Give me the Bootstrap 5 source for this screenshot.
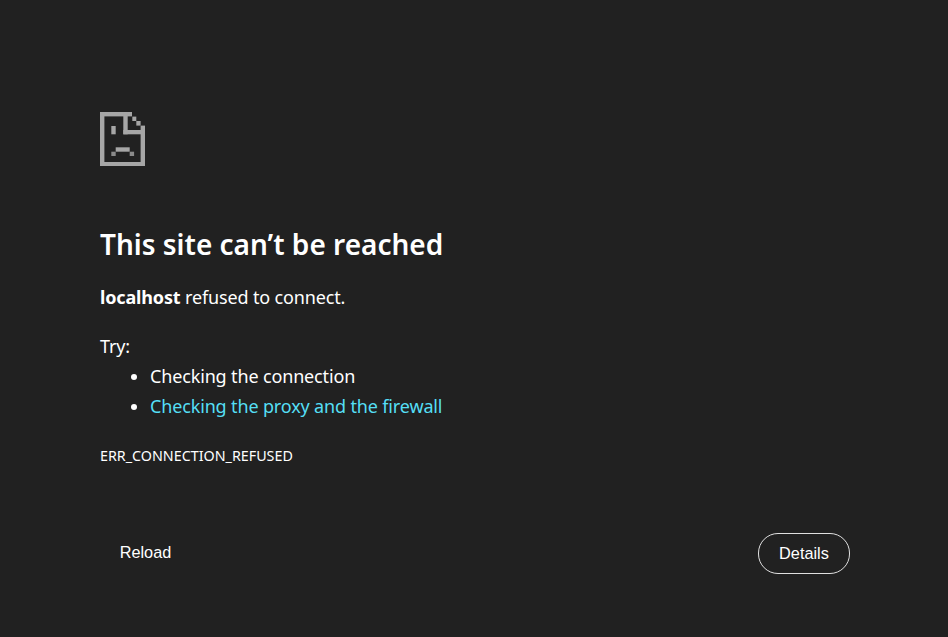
<!DOCTYPE html>
<html lang="en">
<head>
  <meta charset="UTF-8">
  <title>localhost</title>
  <meta name="viewport" content="width=device-width, initial-scale=1">
  <link href="https://cdn.jsdelivr.net/npm/bootstrap@5.3.0/dist/css/bootstrap.min.css" rel="stylesheet">
  <style>
    body {
      background: #212121;
      color: #fff;
      font-family: "Noto Sans", "Open Sans", sans-serif;
      min-height: 100vh;
    }

    .err-page {
      padding: 112px 98px 0 100px;
    }

    .err-icon {
      display: block;
      width: 45px;
      height: 54px;
      margin-bottom: 60px;
    }

    .err-title {
      font-size: 28px;
      line-height: 36px;
      font-weight: 600;
      margin-bottom: 20px;
    }

    .err-text {
      font-size: 18px;
      line-height: 30px;
      letter-spacing: -0.15px;
    }

    .err-para {
      margin-bottom: 20px;
    }

    .err-try {
      line-height: 29px;
    }

    .err-list {
      padding-left: 50px;
      margin-bottom: 25px;
    }

    .err-list a {
      color: #55dff5;
      text-decoration: none;
    }

    .err-code {
      font-size: 14.3px;
      line-height: 20px;
    }

    .err-actions {
      margin-top: 67px;
    }

    .err-btn {
      font-family: "Liberation Sans", Arial, sans-serif;
      font-size: 16.3px;
      color: #fff;
      background: transparent;
      border: 1px solid transparent;
      border-radius: 20px;
      height: 41px;
      width: 92px;
      padding: 0;
    }

    .err-btn-plain {
      width: 91px;
      padding-bottom: 2px;
    }

    .err-btn:hover {
      color: #fff;
    }

    .err-btn-line {
      border-color: #e0e0e0;
    }
  </style>
</head>
<body>

<div class="err-page">
  <svg class="err-icon" viewBox="0 0 45 54" fill="#a6a6a6" aria-hidden="true">
    <rect x="0" y="0" width="32" height="4.4"/>
    <rect x="0" y="0" width="4.4" height="54"/>
    <rect x="0" y="50" width="45" height="4"/>
    <rect x="40.6" y="13.6" width="4.4" height="40.4"/>
    <rect x="23.3" y="0" width="4.4" height="22.3"/>
    <rect x="23.3" y="18" width="21.7" height="4.3"/>
    <rect x="32.3" y="4.6" width="4" height="4.4"/>
    <rect x="36.3" y="9" width="4.3" height="4.6"/>
    <rect x="11.3" y="14" width="4.4" height="8.3"/>
    <rect x="15.7" y="35.3" width="14" height="4.4"/>
    <rect x="11.3" y="39.7" width="4.4" height="4.3" fill="#8a8a8a"/>
    <rect x="29.7" y="39.7" width="4.4" height="4.3" fill="#8a8a8a"/>
  </svg>

  <h1 class="err-title">This site can’t be reached</h1>
  <p class="err-text err-para"><strong>localhost</strong> refused to connect.</p>

  <div class="err-text err-try">Try:</div>
  <ul class="err-text err-list">
    <li>Checking the connection</li>
    <li><a href="#">Checking the proxy and the firewall</a></li>
  </ul>
  <div class="err-code">ERR_CONNECTION_REFUSED</div>

  <div class="err-actions d-flex justify-content-between align-items-center">
    <button type="button" class="btn err-btn err-btn-plain">Reload</button>
    <button type="button" class="btn err-btn err-btn-line">Details</button>
  </div>
</div>

</body>
</html>
